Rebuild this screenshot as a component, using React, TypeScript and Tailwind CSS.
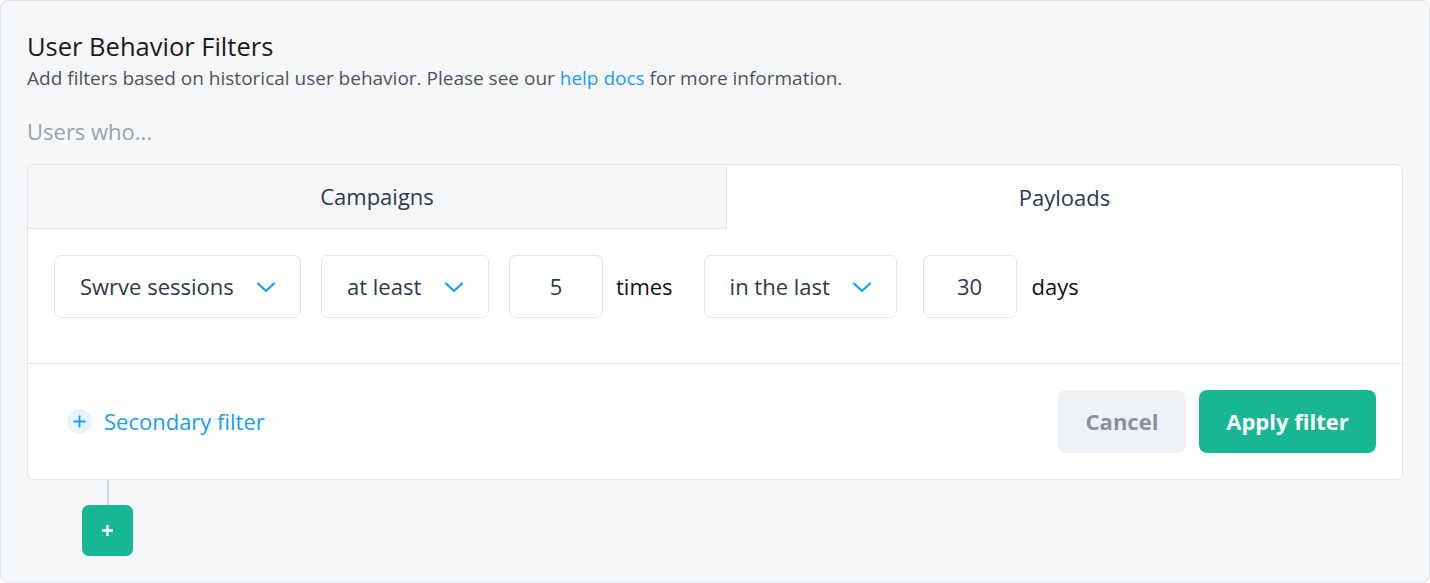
import React from 'react';

const font = { fontFamily: '"Open Sans", "Noto Sans", sans-serif' };

const Chevron: React.FC = () => (
  <svg width="20" height="12" viewBox="0 0 20 12" fill="none" className="shrink-0">
    <path d="M2 2.5l8 7.5 8-7.5" stroke="#1a9cf5" strokeWidth="2.2" strokeLinecap="round" strokeLinejoin="round" />
  </svg>
);

interface SelectProps {
  label: string;
  width: string;
}

const Select: React.FC<SelectProps> = ({ label, width }) => (
  <div
    className={`${width} h-[63px] flex items-center justify-between pl-[25px] pr-[24px] bg-white border border-[#e2e6ea] rounded-[7px] text-[22px] text-[#2c3a4b]`}
  >
    <span>{label}</span>
    <Chevron />
  </div>
);

const NumberBox: React.FC<{ value: string }> = ({ value }) => (
  <div className="w-[94px] h-[63px] flex items-center justify-center bg-white border border-[#e2e6ea] rounded-[7px] text-[22px] text-[#2c3a4b]">
    {value}
  </div>
);

const App: React.FC = () => {
  return (
    <div style={font} className="w-[1430px] h-[583px] bg-white">
      <div className="h-full rounded-[8px] border border-[#e1e4e8] bg-[#f6f7f9] px-[26px] pt-[30px]">
        <h1 className="text-[25.5px] leading-[30px] text-[#1b1b1b]">User Behavior Filters</h1>
        <p className="mt-[4px] text-[19px] leading-[26px] text-[#4a5563]">
          Add filters based on historical user behavior. Please see our{' '}
          <span className="text-[#1a9cf5]">help docs</span> for more information.
        </p>
        <div className="mt-[25px] text-[22px] leading-[30px] text-[#9aa2ab]">Users who...</div>

        <div className="mt-[18px] bg-white border border-[#e2e6ea] rounded-[7px] overflow-hidden">
          <div className="flex h-[64px]">
            <div className="w-[699px] shrink-0 flex items-center justify-center bg-[#f5f6f8] border-r border-b border-[#e2e6ea] text-[22px] text-[#2c3a4b]">
              Campaigns
            </div>
            <div className="flex-1 flex items-center justify-center text-[22px] text-[#2c3a4b]">
              Payloads
            </div>
          </div>

          <div className="flex items-center px-[26px] pt-[26px] pb-[45px] border-b border-[#e2e6ea] text-[22px]">
            <Select label="Swrve sessions" width="w-[247px]" />
            <div className="ml-[20px]">
              <Select label="at least" width="w-[168px]" />
            </div>
            <div className="ml-[20px]">
              <NumberBox value="5" />
            </div>
            <span className="ml-[13px] text-[#111]">times</span>
            <div className="ml-[31px]">
              <Select label="in the last" width="w-[193px]" />
            </div>
            <div className="ml-[26px]">
              <NumberBox value="30" />
            </div>
            <span className="ml-[15px] text-[#111]">days</span>
          </div>

          <div className="flex items-center justify-between pl-[39px] pr-[26px] h-[115px]">
            <div className="flex items-center gap-[12px] text-[#1a9cf5]">
              <span className="w-[25px] h-[25px] rounded-full bg-[#e6f4fe] flex items-center justify-center">
                <svg width="13" height="13" viewBox="0 0 13 13">
                  <path d="M6.5 0.5v12M0.5 6.5h12" stroke="#1a9cf5" strokeWidth="1.8" />
                </svg>
              </span>
              <span className="text-[22px]">Secondary filter</span>
            </div>
            <div className="flex items-center gap-[13px]">
              <button className="w-[128px] h-[63px] rounded-[8px] bg-[#eef1f5] text-[#89919a] text-[22px] font-bold">
                Cancel
              </button>
              <button className="w-[177px] h-[63px] rounded-[8px] bg-[#17b794] text-white text-[22px] font-bold">
                Apply filter
              </button>
            </div>
          </div>
        </div>

        <div className="ml-[55px] flex flex-col items-center w-[51px]">
          <div className="w-[2px] h-[25px] bg-[#d5d9de]" />
          <button className="w-[51px] h-[51px] rounded-[7px] bg-[#17b794] flex items-center justify-center">
            <svg width="13" height="13" viewBox="0 0 13 13">
              <path d="M6.5 1v11M1 6.5h11" stroke="#fff" strokeWidth="2.4" />
            </svg>
          </button>
        </div>
      </div>
    </div>
  );
};

export default App;
